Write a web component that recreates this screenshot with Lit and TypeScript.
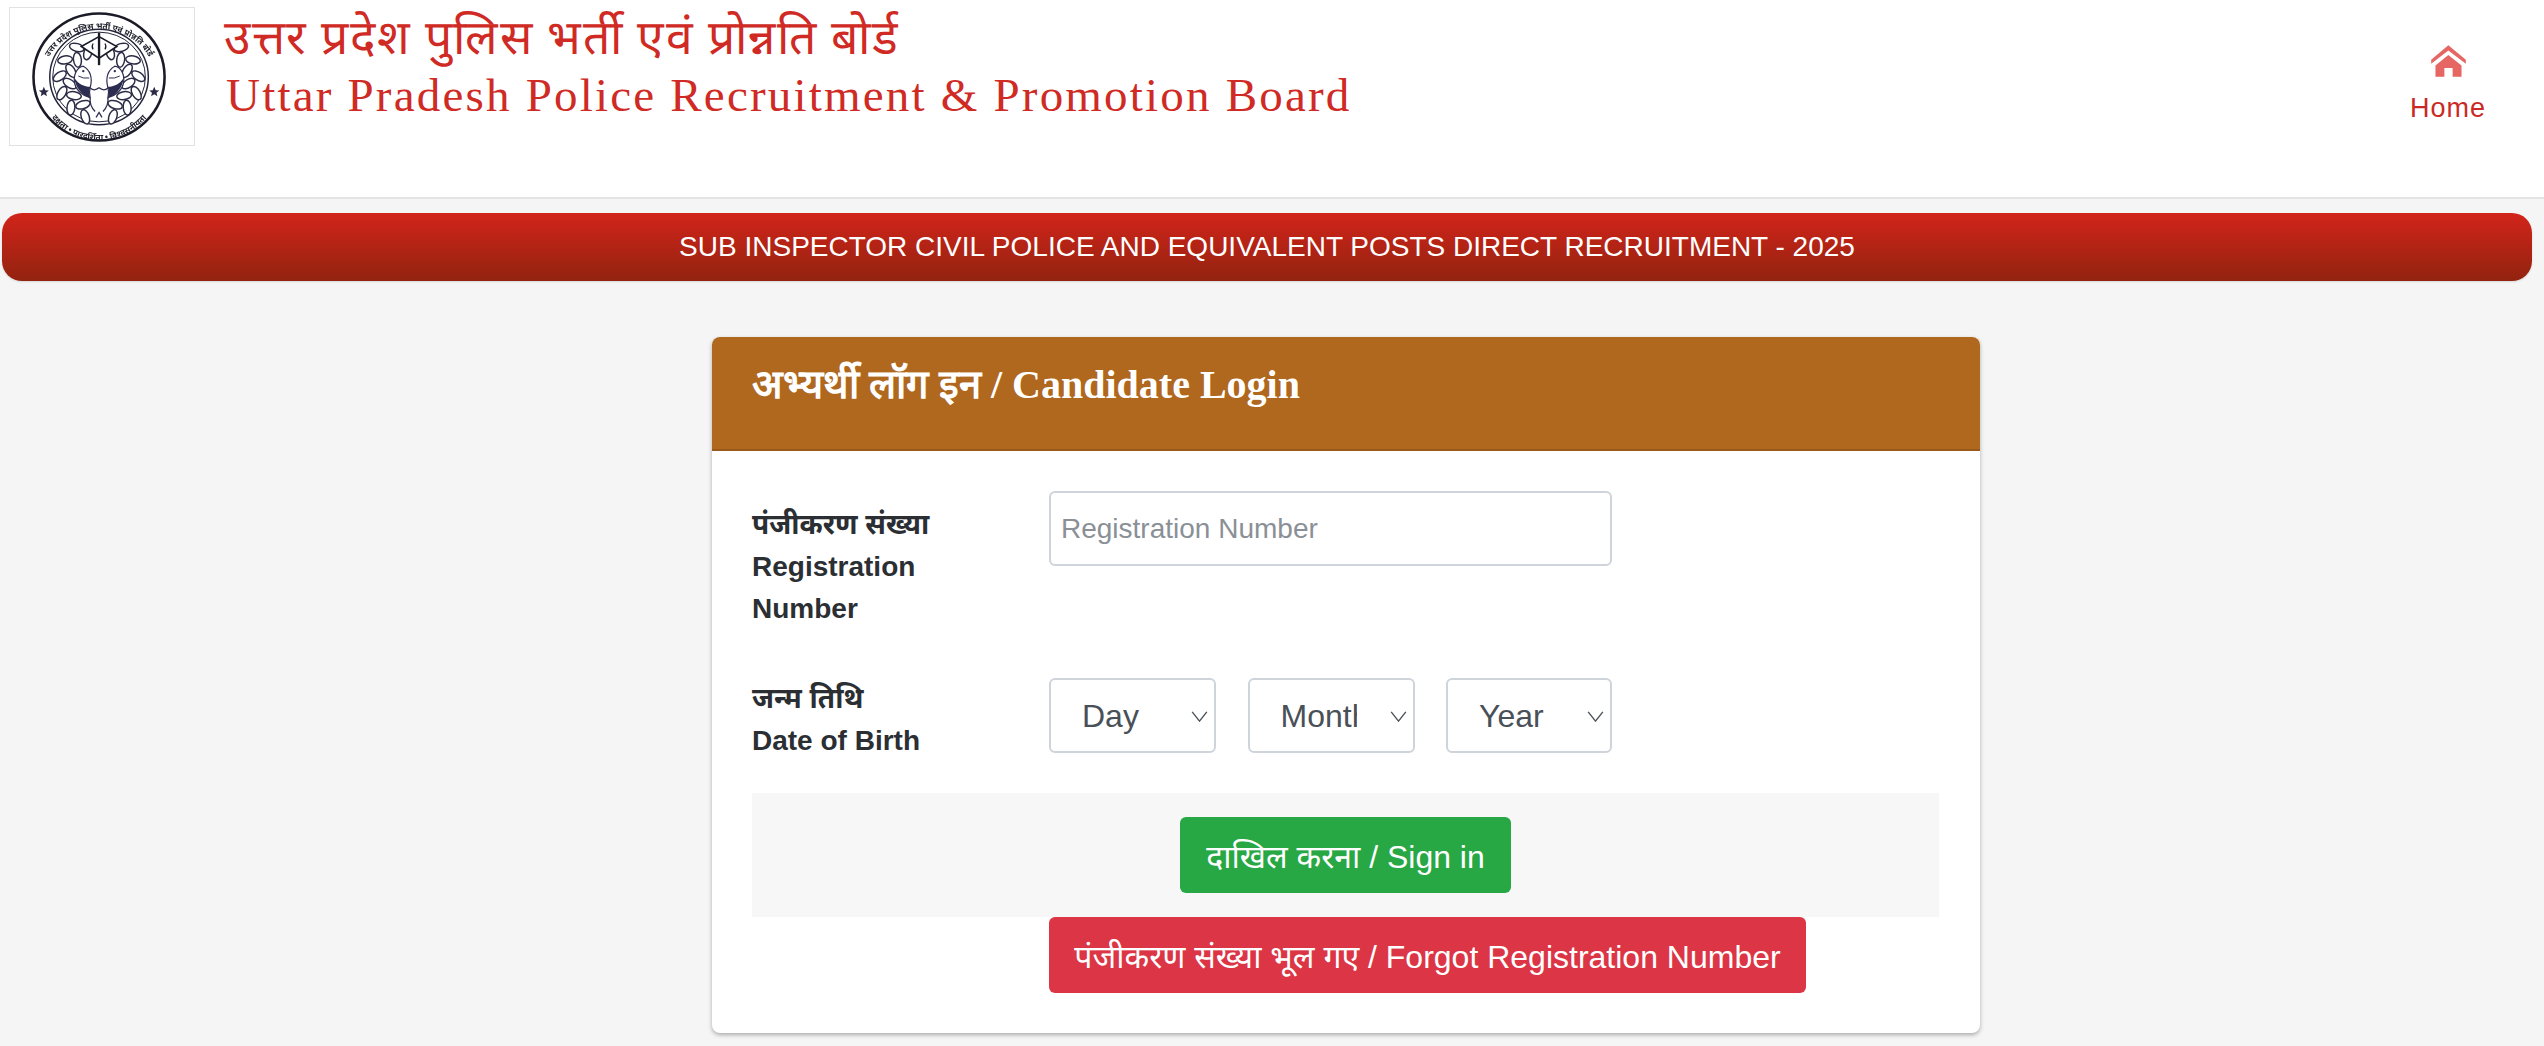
import { LitElement, html, css, svg } from "lit";
import { customElement } from "lit/decorators.js";

const SANS = css`"Liberation Sans", Arial, "Noto Sans", sans-serif`;

function laurel(side: number) {
  const out = [];
  for (let i = 0; i < 12; i++) {
    const deg = -68 + i * 12.5;
    const a = (deg * Math.PI) / 180;
    const off = i % 2 ? 5 : -5;
    const r = 35 + off;
    const cx = 99 + side * r * Math.cos(a);
    const cy = 80 + r * Math.sin(a);
    const rot = side * (deg + (i % 2 ? 40 : -40));
    out.push(svg`<ellipse cx=${cx} cy=${cy} rx="7.5" ry="4" fill="#fff" stroke="#2b2b45" stroke-width="1.5" transform="rotate(${rot} ${cx} ${cy})"/>`);
  }
  return out;
}

const fish = svg`
  <path d="M83 66 C77 67 73 74 74 82 C75 90 82 96 90 98 C89 94 89 91 90 88 C92 80 92 71 83 66 Z" fill="#fff" stroke="#2c2c50" stroke-width="1.2"/>
  <path d="M74 78 C75 88 82 96 90 98 C89 94 89 91 90 87 C84 87 78 84 74 78 Z" fill="#2c2c50"/>
  <circle cx="83" cy="71" r="1.2" fill="#2c2c50"/>
  <path d="M78 76 q5 3 11 2" fill="none" stroke="#2c2c50" stroke-width="1"/>`;

const seal = html`<svg class="seal" viewBox="0 0 186 139" aria-hidden="true">
  <g transform="translate(-9 -7)">
    <defs>
      <path id="arcTop" d="M41 92 A58.5 56.5 0 1 1 157 92"/>
      <path id="arcBottom" d="M44 108 A61.5 60 0 0 0 154 108"/>
    </defs>
    <g class="soft">
      <ellipse cx="99" cy="77" rx="66.5" ry="64.5" fill="#fff" stroke="#1b1b28" stroke-width="2.6"/>
      <ellipse cx="99" cy="77" rx="50" ry="48.5" fill="none" stroke="#24243a" stroke-width="1.5"/>
      <ellipse cx="99" cy="77" rx="47" ry="45.5" fill="none" stroke="#24243a" stroke-width="1"/>
      <text class="arc"><textPath href="#arcTop" startOffset="50%" text-anchor="middle">उत्तर प्रदेश पुलिस भर्ती एवं प्रोन्नति बोर्ड</textPath></text>
      <text class="arc"><textPath href="#arcBottom" startOffset="50%" text-anchor="middle">दक्षता • पारदर्शिता • विश्वसनीयता</textPath></text>
      <path d="M43 87l1.5 3.4 3.6.3-2.8 2.3.9 3.5-3.2-1.9-3.2 1.9.9-3.5-2.8-2.3 3.6-.3zM155 87l1.5 3.4 3.6.3-2.8 2.3.9 3.5-3.2-1.9-3.2 1.9.9-3.5-2.8-2.3 3.6-.3z" fill="#2b2b45"/>
      ${laurel(-1)}${laurel(1)}
      <path d="M81 46 L99 36 L117 46 L99 58 Z" fill="#fff" stroke="#1b1b28" stroke-width="1.6"/>
      <path d="M99 32 V65" stroke="#1b1b28" stroke-width="2.4"/>
      <path d="M93 43 q-2 3 0 6 M105 43 q2 3 0 6" fill="none" stroke="#1b1b28" stroke-width="1.2"/>
      ${fish}
      <g transform="matrix(-1 0 0 1 198 0)">${fish}</g>
      <path d="M90 88 q4 4 9 0 q5 4 9 0 M90 98 q-1 8 5 14 M108 98 q1 8 -5 14 M96 118 l3 -5 l3 5" fill="none" stroke="#2c2c50" stroke-width="1.3"/>
    </g>
  </g>
</svg>`;

const chevron = html`<svg class="chev" viewBox="0 0 18 12" aria-hidden="true"><path d="M1 1l8 10 8-10" fill="none" stroke="#4a5056" stroke-width="1.5"/></svg>`;

@customElement("app-root")
export class AppRoot extends LitElement {
  static styles = css`
    :host { display: block; min-height: 1046px; background: #f5f5f5; font-family: ${SANS}; color: #2f3338; overflow: hidden; }
  `;
  render() {
    return html`<site-header></site-header><login-page></login-page>`;
  }
}

@customElement("site-header")
export class SiteHeader extends LitElement {
  static styles = css`
    :host { display: flex; height: 197px; background: #fff; border-bottom: 2px solid #e3e3e3; }
    .logo { width: 186px; height: 139px; margin: 7px 0 0 9px; box-sizing: border-box; border: 1px solid #e2e2e2; flex: none; overflow: hidden; }
    .seal { display: block; width: 100%; height: 100%; }
    .soft { filter: blur(0.4px); }
    .arc { font: 700 8.4px "Noto Sans", "Liberation Sans", sans-serif; fill: #22222e; }
    .titles { margin-left: 29px; flex: 1; color: #d02a25; font-family: "Liberation Serif", "Times New Roman", serif; }
    .hi { font-size: 48px; line-height: 58px; letter-spacing: 1.6px; margin-top: 9px; }
    .en { font-size: 47px; line-height: 54px; letter-spacing: 2.2px; margin: 1px 0 0 2px; }
    .home { display: flex; flex-direction: column; align-items: center; width: 76px; margin: 45px 58px 0 0; font-size: 27px; letter-spacing: 1px; color: #c92a25; line-height: 30px; }
    .home svg { width: 35px; height: 32px; margin-bottom: 16px; display: block; }
  `;
  render() {
    return html`
      <div class="logo">${seal}</div>
      <div class="titles">
        <div class="hi">उत्तर प्रदेश पुलिस भर्ती एवं प्रोन्नति बोर्ड</div>
        <div class="en">Uttar Pradesh Police Recruitment &amp; Promotion Board</div>
      </div>
      <div class="home">
        <svg viewBox="690 135 105 97" aria-hidden="true"><path fill="#e56662" d="M742 136 795 180V192L742 152 690 192V180ZM703 197 742 165 782 197V231H755V205H730V231H703Z"/></svg>
        <span>Home</span>
      </div>`;
  }
}

@customElement("login-page")
export class LoginPage extends LitElement {
  static styles = css`
    :host { display: block; padding-top: 14px; }
    .banner { margin: 0 12px 0 2px; height: 68px; border-radius: 20px; background: linear-gradient(#d2241a, #92230f); color: #fff; display: flex; align-items: center; justify-content: center; font-size: 28px; box-shadow: 0 1px 2px rgba(0,0,0,.12); }
    .card { width: 1268px; height: 696px; box-sizing: border-box; margin: 56px 0 0 712px; background: #fff; border-radius: 8px; box-shadow: 0 2px 4px rgba(0,0,0,.3); overflow: hidden; }
    .head { height: 114px; box-sizing: border-box; background: #b0671e; border-bottom: 2px solid #98591b; color: #fff; padding: 24px 40px 0; font: 700 40px/48px "Liberation Serif", "Times New Roman", serif; }
    .body { padding: 40px 41px 40px 40px; }
    .row { display: grid; grid-template-columns: 297px 563px; align-items: start; }
    .row.dob { margin-top: 48px; }
    label { font-weight: 700; font-size: 28px; line-height: 42px; color: #2b2f33; display: block; width: 250px; }
    label.first { padding-top: 13px; }
    label span { display: block; }
    input { box-sizing: border-box; width: 100%; height: 75px; border: 2px solid #ced4da; border-radius: 6px; padding: 0 10px; font: 28px ${SANS}; background: #fff; outline: none; }
    input::placeholder { color: #8a9096; opacity: 1; }
    .selects { display: grid; grid-template-columns: 167px 167px 166px; column-gap: 31.5px; }
    .sel { position: relative; }
    select { appearance: none; -webkit-appearance: none; box-sizing: border-box; width: 100%; height: 75px; border: 2px solid #ced4da; border-radius: 6px; background: #fff; font: 32px ${SANS}; color: #495057; padding: 0 56px 0 31px; outline: none; }
    .chev { position: absolute; right: 8px; top: 33px; width: 17px; height: 11px; pointer-events: none; }
    .foot { margin-top: 31px; height: 124px; background: #f7f7f7; display: flex; justify-content: center; align-items: center; }
    button { border: 0; height: 76px; border-radius: 6px; color: #fff; font: 32px ${SANS}; display: block; padding: 0; }
    .signin { background: #28a745; width: 331px; }
    .forgot { background: #dc3545; margin-left: 297px; width: 757px; }
  `;
  render() {
    return html`
      <div class="banner">SUB INSPECTOR CIVIL POLICE AND EQUIVALENT POSTS DIRECT RECRUITMENT - 2025</div>
      <section class="card">
        <div class="head">अभ्यर्थी लॉग इन / Candidate Login</div>
        <div class="body">
          <div class="row">
            <label class="first"><span>पंजीकरण संख्या</span><span>Registration Number</span></label>
            <input placeholder="Registration Number" />
          </div>
          <div class="row dob">
            <label><span>जन्म तिथि</span><span>Date of Birth</span></label>
            <div class="selects">
              <div class="sel"><select><option>Day</option></select>${chevron}</div>
              <div class="sel"><select><option>Month</option></select>${chevron}</div>
              <div class="sel"><select><option>Year</option></select>${chevron}</div>
            </div>
          </div>
          <div class="foot"><button class="signin">दाखिल करना / Sign in</button></div>
          <button class="forgot">पंजीकरण संख्या भूल गए / Forgot Registration Number</button>
        </div>
      </section>`;
  }
}
